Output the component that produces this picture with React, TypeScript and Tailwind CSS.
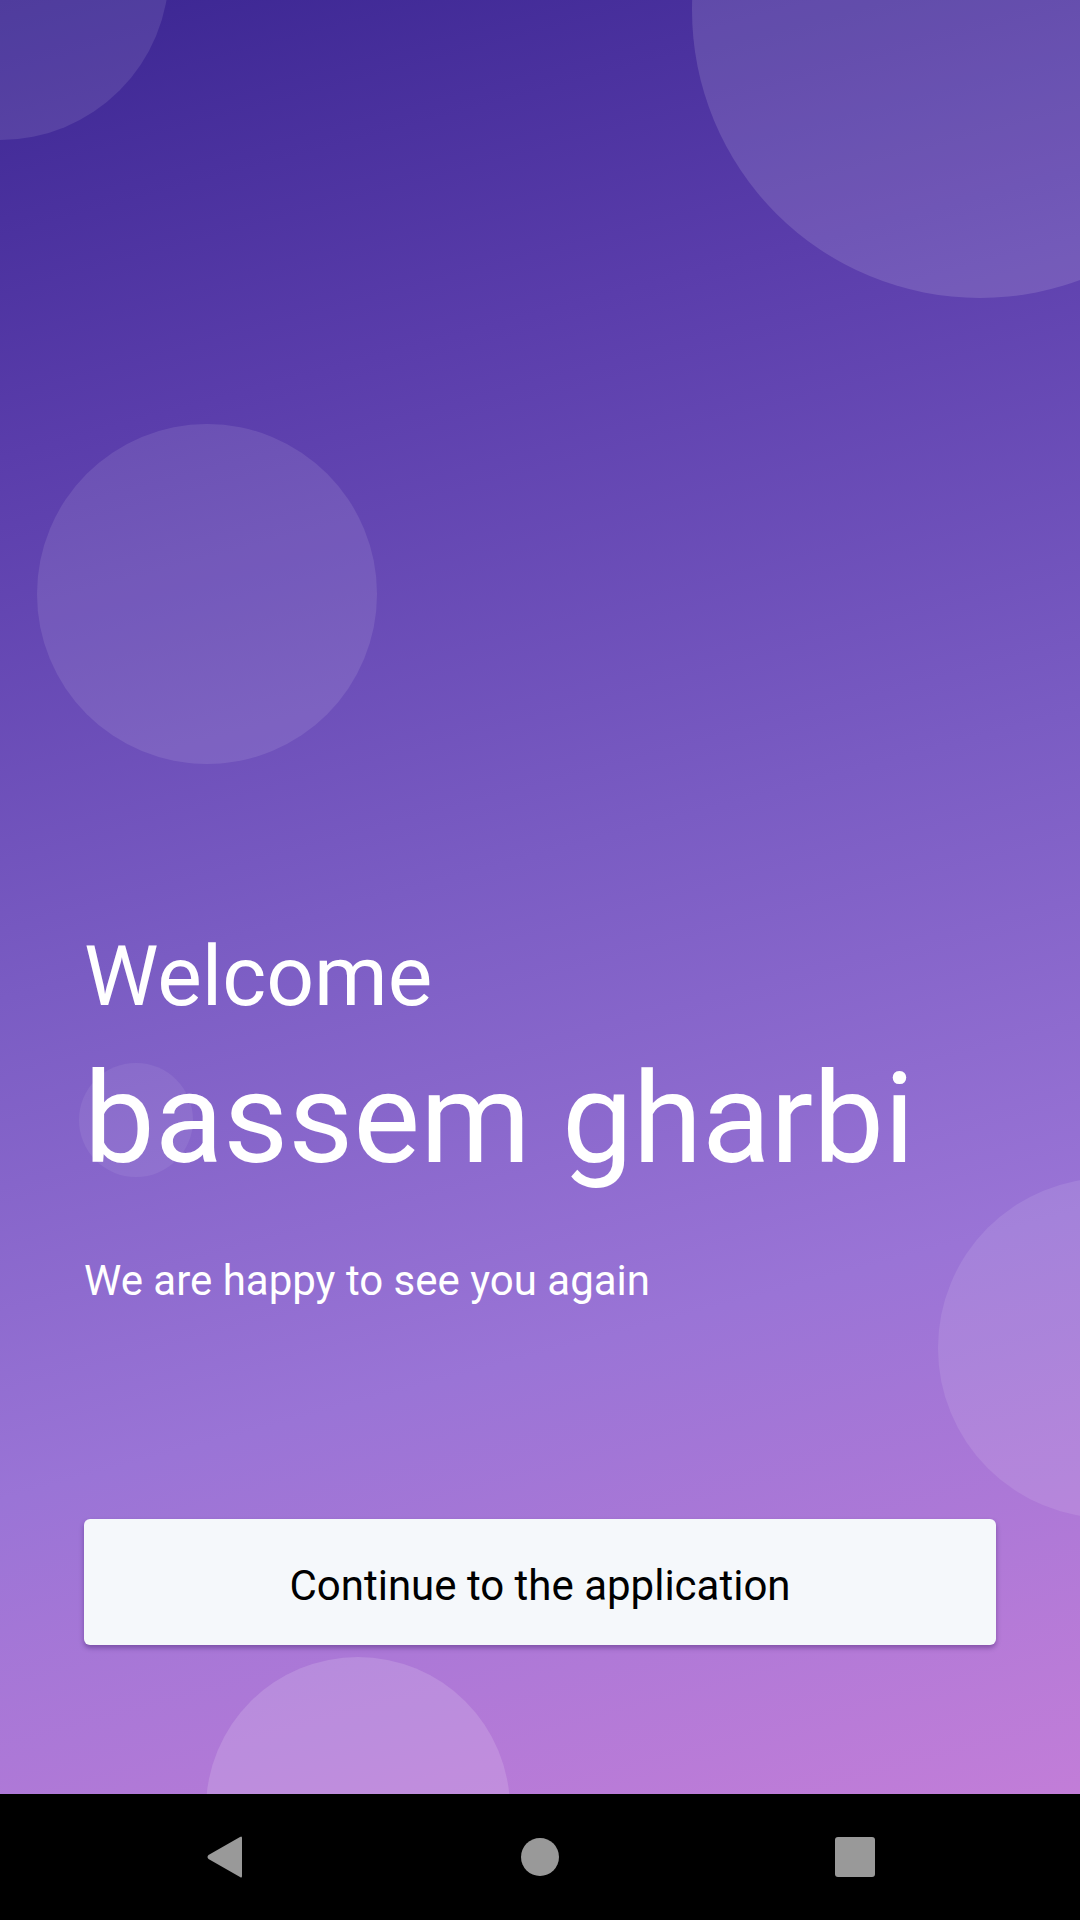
export default function App() {
  return (
    <div className="w-[1080px] h-[1920px] flex flex-col overflow-hidden font-['Roboto',sans-serif]">
      <main className="relative flex-1 overflow-hidden bg-[linear-gradient(165deg,#3b2692_0%,#5a3dab_22%,#7a5cc3_48%,#9a74d6_72%,#c27dd8_100%)]">
        {/* decorative bubbles */}
        <div className="absolute left-[-169px] top-[-198px] w-[338px] h-[338px] rounded-full bg-white/10" />
        <div className="absolute left-[692px] top-[-278px] w-[576px] h-[576px] rounded-full bg-white/[0.13]" />
        <div className="absolute left-[37px] top-[424px] w-[340px] h-[340px] rounded-full bg-white/10" />
        <div className="absolute left-[79px] top-[1063px] w-[114px] h-[114px] rounded-full bg-white/[0.07]" />
        <div className="absolute left-[938px] top-[1178px] w-[340px] h-[340px] rounded-full bg-white/10" />
        <div className="absolute left-[206px] top-[1657px] w-[304px] h-[304px] rounded-full bg-white/15" />

        <div className="relative flex flex-col px-[84px] pt-[935px] text-white">
          <h2 className="text-[84px] leading-none font-normal">Welcome</h2>
          <h1 className="mt-[37px] text-[126px] leading-none font-normal">bassem gharbi</h1>
          <p className="mt-[78px] text-[42px] leading-none">We are happy to see you again</p>
          <button className="mt-[217px] h-[126px] w-full pt-[7px] rounded-[6px] bg-[#f5f8fb] text-[42px] text-black shadow-[0_3px_5px_rgba(40,10,80,0.35)]">
            Continue to the application
          </button>
        </div>
      </main>

      <nav className="h-[126px] bg-black flex items-center justify-center gap-[195px]">
        <div className="w-[120px] flex justify-center">
          <svg width="38" height="44" viewBox="0 0 38 44">
            <path d="M36 3 L36 41 Q36 43.5 34 42 L2.5 24 Q0.5 22 2.5 20 L34 2 Q36 0.5 36 3 Z" fill="#999999" />
          </svg>
        </div>
        <div className="w-[120px] flex justify-center">
          <div className="w-[38px] h-[38px] rounded-full bg-[#999999]" />
        </div>
        <div className="w-[120px] flex justify-center">
          <div className="w-[40px] h-[40px] rounded-[3px] bg-[#999999]" />
        </div>
      </nav>
    </div>
  );
}
